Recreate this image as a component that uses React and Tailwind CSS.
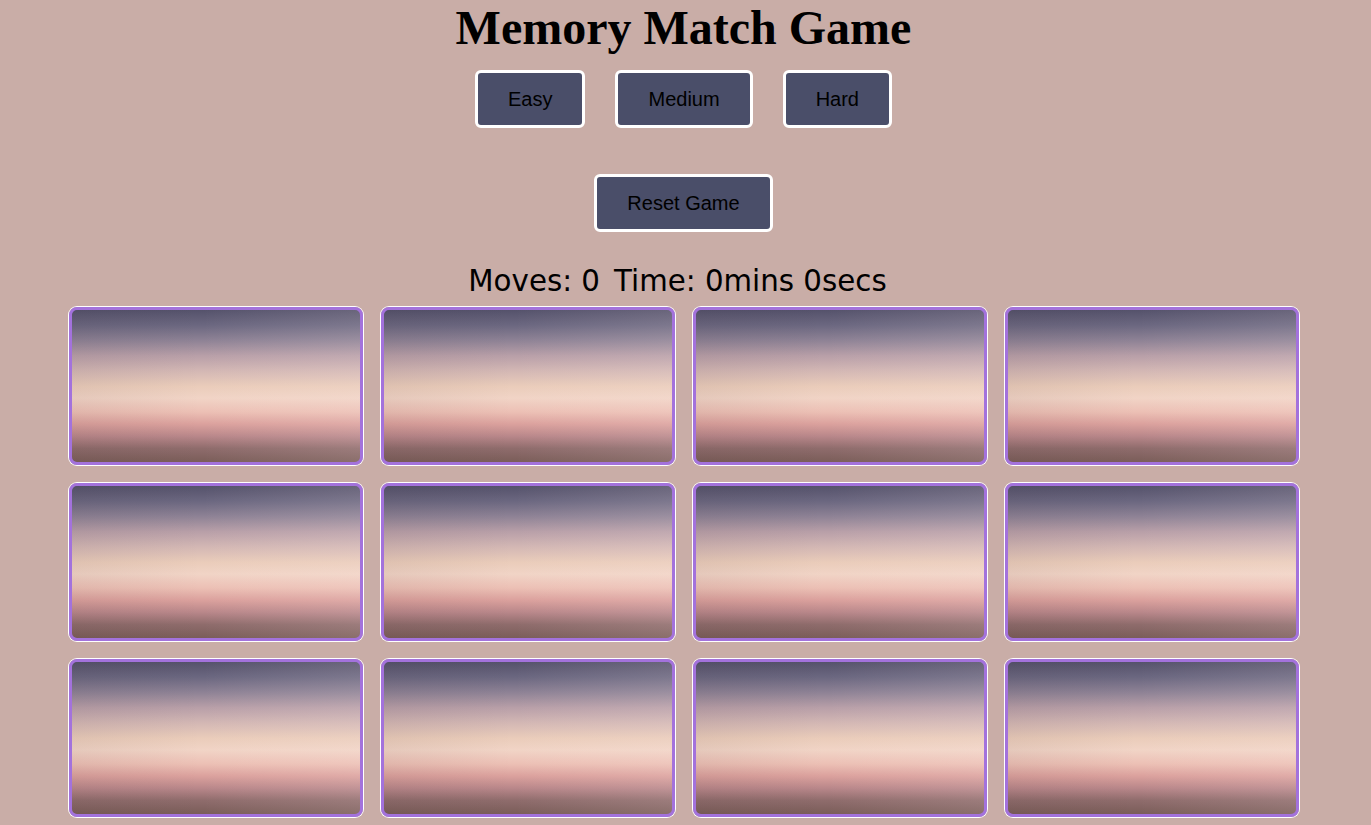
import { useState } from 'react'

const LEVELS = ['Easy', 'Medium', 'Hard']

function Card() {
  return (
    <div className="relative h-[158px] rounded-lg border-[3px] border-[#a372dc] ring-1 ring-white overflow-hidden bg-[linear-gradient(to_bottom,#55526b_0%,#6b6780_10%,#8e8295_20%,#b89fa8_30%,#d3b7b4_40%,#eaccba_50%,#f1d4c6_58%,#ecc0b5_67%,#dba19d_75%,#b9878a_83%,#8f6c6c_91%,#7a5d59_100%)]">
      <div className="absolute inset-0 bg-[linear-gradient(to_right,rgba(40,20,20,0.06)_0%,rgba(0,0,0,0)_45%,rgba(255,240,240,0.12)_100%)]" />
    </div>
  )
}

export default function App() {
  const [moves] = useState(0)
  const cards = Array.from({ length: 12 }, (_, i) => i)

  return (
    <div className="h-[825px] overflow-hidden bg-[#c9ada7]">
      <div className="w-[1367px] flex flex-col items-center">
        <h1 className="m-0 text-[48px] font-bold leading-[55px] text-black font-['Liberation_Serif',serif]">
          Memory Match Game
        </h1>

        <div className="mt-[15px] flex gap-[30px] font-['Liberation_Sans',Arial,sans-serif]">
          {LEVELS.map((l) => (
            <button
              key={l}
              className="px-[30px] py-[14.5px] text-[20px] leading-[23px] text-black bg-[#4a4e69] border-[3px] border-white rounded-md"
            >
              {l}
            </button>
          ))}
        </div>

        <button className="mt-[46px] px-[30px] py-[14.5px] text-[20px] leading-[23px] text-black bg-[#4a4e69] border-[3px] border-white rounded-md font-['Liberation_Sans',Arial,sans-serif]">
          Reset Game
        </button>

        <p className="mt-[33px] mr-[12px] text-[29.3px] leading-[33px] text-black font-['DejaVu_Sans',Verdana,sans-serif]">
          <span>Moves: {moves}</span>
          <span className="ml-[14px]">Time: 0mins 0secs</span>
        </p>

        <div className="mt-[9px] w-[1230px] grid grid-cols-4 gap-[18px]">
          {cards.map((c) => (
            <Card key={c} />
          ))}
        </div>
      </div>
    </div>
  )
}
